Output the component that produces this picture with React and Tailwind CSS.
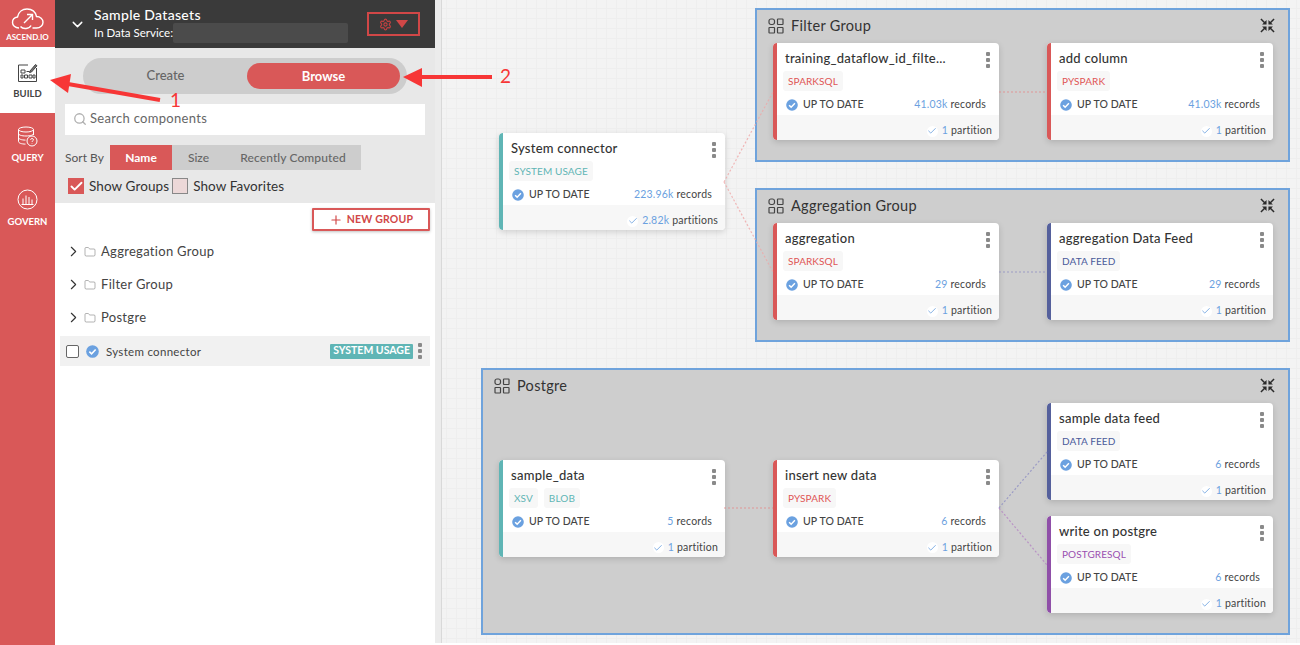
import { ChevronDown, ChevronRight, Folder, Search, Plus, Settings, Check } from "lucide-react";

const font = "font-['Lato','Noto_Sans',sans-serif]";

// small helpers
const CheckCircle = ({ size = 12 }) => (
  <svg width={size} height={size} viewBox="0 0 14 14" className="shrink-0">
    <circle cx="7" cy="7" r="6.8" fill="#6ba1e0" />
    <path d="M3.6 7.2l2.4 2.3 4.4-4.6" fill="none" stroke="#fff" strokeWidth="1.7" />
  </svg>
);

const Dots = () => (
  <div className="flex flex-col gap-[2px]">
    <span className="w-[4px] h-[4px] bg-[#8a8a8a] rounded-[1px]" />
    <span className="w-[4px] h-[4px] bg-[#8a8a8a] rounded-[1px]" />
    <span className="w-[4px] h-[4px] bg-[#8a8a8a] rounded-[1px]" />
  </div>
);

const GroupIcon = () => (
  <svg width="16" height="16" viewBox="0 0 16 16" fill="none" stroke="#444" strokeWidth="1.2">
    <rect x="1" y="1" width="5.5" height="5.5" rx="2" />
    <rect x="9.5" y="1" width="5.5" height="5.5" rx="0.5" />
    <rect x="1" y="9.5" width="5.5" height="5.5" rx="0.5" />
    <rect x="9.5" y="9.5" width="5.5" height="5.5" rx="0.5" />
  </svg>
);

// four arrows pointing to the middle
const CollapseIcon = () => (
  <svg width="15" height="15" viewBox="0 0 16 16" fill="#2b2b2b" stroke="#2b2b2b" strokeWidth="1.6">
    <path d="M1 1l4.5 4.5M15 1l-4.5 4.5M1 15l4.5-4.5M15 15l-4.5-4.5" fill="none" />
    <path d="M7 7H2.2L7 2.2zM9 7h4.8L9 2.2zM7 9H2.2L7 13.8zM9 9h4.8L9 13.8z" stroke="none" />
  </svg>
);

const Tag = ({ label, color }) => (
  <span className={`h-[20px] px-[5px] flex items-center bg-[#f7f7f7] rounded-[3px] text-[10px] leading-none tracking-[0.1px] ${color}`}>
    {label}
  </span>
);

const Node = ({ name, tags, tagColor, bar, records, partitions, unit, className = "" }) => (
  <div className={`w-[226px] h-[97px] bg-white rounded-[4px] shadow-[0_2px_6px_rgba(0,0,0,0.15)] flex overflow-hidden ${className}`}>
    <div className={`w-[4px] shrink-0 rounded-l-[3px] ${bar}`} />
    <div className="flex-1 flex flex-col min-w-0">
      <div className="h-[72px] pl-[8px] pr-[8px]">
        <div className="flex justify-between pt-[7px] h-[28px]">
          <span className="text-[13px] leading-[16px] text-[#333] font-medium tracking-[0.25px]">{name}</span>
          <div className="pt-[2px] pr-[1px]"><Dots /></div>
        </div>
        <div className="flex gap-[6px] -ml-[2px]">
          {tags.map((t) => (
            <Tag key={t} label={t} color={tagColor} />
          ))}
        </div>
        <div className="flex items-center h-[24px] pt-[4px] pl-[1px] pr-[5px]">
          <CheckCircle />
          <span className="ml-[5px] text-[10.5px] font-medium text-[#444] tracking-[0.1px]">UP TO DATE</span>
          <span className="ml-auto text-[10.5px] text-[#444] tracking-[0.2px]">
            <span className="text-[#6ba1e0]">{records}</span> records
          </span>
        </div>
      </div>
      <div className="h-[25px] bg-[#f7f7f7] flex items-center justify-end gap-[4px] pt-[7px] pr-[7px] text-[10.5px] text-[#444] tracking-[0.2px]">
        <span className="w-[11px] h-[11px] rounded-full bg-white flex items-center justify-center">
          <Check size={10} className="text-[#6ba1e0]" />
        </span>
        <span>
          <span className="text-[#6ba1e0]">{partitions}</span> {unit}
        </span>
      </div>
    </div>
  </div>
);

const GroupHeader = ({ title }) => (
  <div className="flex items-center justify-between h-[33px] pl-[11px] pr-[13px] pb-[2px]">
    <div className="flex items-center gap-[7px]">
      <GroupIcon />
      <span className="text-[14.5px] text-[#333] tracking-[0.3px]">{title}</span>
    </div>
    <CollapseIcon />
  </div>
);

const sideItems = [
  { label: "Aggregation Group" },
  { label: "Filter Group" },
  { label: "Postgre" },
];

const Nav = () => (
  <div className="w-[55px] shrink-0 bg-[#d95858] flex flex-col items-center text-white font-bold text-[9.5px]">
    <div className="h-[47px] w-full flex flex-col items-center pt-[7px]">
      <svg width="34" height="24" viewBox="0 0 34 24" fill="none" stroke="#fff" strokeWidth="1.4">
        <path d="M8 21c-4 0-6.5-2.6-6.5-5.6 0-2.8 2-5 5-5.4C7.5 5 11.5 2 16 2c5 0 8.5 3 9.5 7.5 3.8 0 6.5 2.5 6.5 5.7 0 3.2-2.7 5.8-6.5 5.8-1.5 0-3 0-4 0" />
        <path d="M9.5 19.5c2.5 3 9 2.5 10.5-1M13 16l8-8M16 7.5h5.5V13" />
      </svg>
      <span className="mt-[2px] leading-none text-[8px]">ASCEND.IO</span>
    </div>
    <div className="h-[66px] w-full bg-white text-[#444] flex flex-col items-center pt-[15px]">
      <svg width="21" height="21" viewBox="0 0 21 21" fill="none" stroke="#444" strokeWidth="1">
        <path d="M11 3H1.5v16.5h18V6" />
        <path d="M4 8h4v3H4zM4 13h2v3H4zM7.5 13h3v3h-3zM12 13h3v3h-3zM16 13h2v3h-2zM9.5 9.5h3" />
        <path d="M13 9l5.5-6.5 1.5 1.3L14.5 10l-2 .5z" fill="#777" />
      </svg>
      <span className="mt-[6px] leading-none">BUILD</span>
    </div>
    <div className="h-[64px] w-full flex flex-col items-center pt-[13px]">
      <svg width="21" height="22" viewBox="0 0 21 22" fill="none" stroke="#fff" strokeWidth="1">
        <ellipse cx="9" cy="3.5" rx="7.5" ry="2.5" />
        <path d="M1.5 3.5v12c0 1.5 3 2.6 7 2.6M16.5 3.5V9M1.5 7.5c0 1.5 3 2.5 7.5 2.5s7.5-1 7.5-2.5M1.5 11.5c0 1.5 3 2.6 7 2.6" />
        <circle cx="15" cy="15" r="5" />
        <path d="M13.5 13.7c.3-1.6 3-1.5 3 .1 0 1-1.5 1-1.5 2.2M15 17.3v.5" />
      </svg>
      <span className="mt-[5px] leading-none">QUERY</span>
    </div>
    <div className="h-[64px] w-full flex flex-col items-center pt-[12px]">
      <svg width="21" height="21" viewBox="0 0 21 21" fill="none" stroke="#fff" strokeWidth="1">
        <circle cx="10.5" cy="10.5" r="9.5" />
        <path d="M6 15V9.5M9 15V6.5M12 15V8M15 15V10.5M4.5 15.5h12" />
      </svg>
      <span className="mt-[7px] leading-none">GOVERN</span>
    </div>
  </div>
);

const Panel = () => (
  <div className="w-[380px] shrink-0 bg-white flex flex-col">
    {/* dark header */}
    <div className="h-[48px] bg-[#3a3a3a] flex items-center pl-[14px] pr-[15px] text-white">
      <ChevronDown size={17} strokeWidth={2} className="mr-[8px]" />
      <div className="flex-1">
        <div className="text-[14px] leading-[16px] tracking-[0.3px] font-medium mt-[2px]">Sample Datasets</div>
        <div className="flex items-center text-[11.5px] leading-none h-[20px]">
          <span>In Data Service:</span>
          <span className="w-[175px] h-[20px] rounded-[2px] bg-[#4b4b4b]" />
        </div>
      </div>
      <div className="w-[53px] h-[24px] border-2 border-[#d14747] flex items-center justify-center gap-[4px]">
        <Settings size={13} className="text-[#c94040]" />
        <span className="w-0 h-0 border-x-[6px] border-x-transparent border-t-[8px] border-t-[#d14747]" />
      </div>
    </div>
    {/* controls */}
    <div className="h-[155px] bg-[#e8e8e8] flex flex-col px-[10px]">
      <div className="mt-[10px] ml-[18px] w-[324px] h-[36px] rounded-full bg-[#cdcdcd] flex items-center text-[13px]">
        <span className="w-[165px] text-center text-[#666] font-medium">Create</span>
        <span className="w-[153px] -ml-[1px] h-[26px] rounded-full bg-[#d95858] text-white font-bold text-center leading-[26px]">Browse</span>
      </div>
      <div className="mt-[10px] h-[31px] w-[360px] bg-white flex items-center pl-[8px] pb-[2px] text-[13px] text-[#666] tracking-[0.3px]">
        <Search size={14} strokeWidth={2.2} className="text-[#b0b0b0] mr-[3px]" />
        Search components
      </div>
      <div className="mt-[10px] flex items-center h-[25px] text-[12px] text-[#555]">
        <span className="w-[45px]">Sort By</span>
        <span className="w-[62px] h-full bg-[#d95858] text-white font-bold flex items-center justify-center">Name</span>
        <span className="w-[53px] h-full bg-[#cdcdcd] text-[#666] font-medium flex items-center justify-center">Size</span>
        <span className="w-[136px] h-full bg-[#cdcdcd] text-[#666] font-medium flex items-center justify-center tracking-[0.1px]">Recently Computed</span>
      </div>
      <div className="mt-[6px] flex items-center h-[20px] text-[13.5px] text-[#333] tracking-[0.1px]">
        <span className="w-[16px] h-[16px] ml-[3px] bg-[#d95858] flex items-center justify-center">
          <Check size={15} strokeWidth={3} className="text-white" />
        </span>
        <span className="ml-[5px] mr-[3px]">Show Groups</span>
        <span className="w-[16px] h-[16px] bg-[#ecd8d8] border border-[#888]" />
        <span className="ml-[5px]">Show Favorites</span>
      </div>
    </div>
    {/* component list */}
    <div className="flex-1 pl-[5px] pr-[5px]">
      <div className="flex justify-end pt-[5px]">
        <div className="w-[118px] h-[23px] border-2 border-[#d95858] rounded-[1px] shadow-[0_1px_3px_rgba(0,0,0,0.25)] flex items-center justify-center gap-[4px] text-[10.5px] font-bold text-[#d14747] tracking-[0.2px]">
          <Plus size={14} strokeWidth={2} />
          NEW GROUP
        </div>
      </div>
      <div className="mt-[4px] pl-[7px]">
        {sideItems.map((it) => (
          <div key={it.label} className="h-[33px] flex items-center text-[13px] text-[#444] tracking-[0.3px]">
            <ChevronRight size={17} strokeWidth={1.6} className="text-[#333] -ml-[2px]" />
            <Folder size={12} strokeWidth={1} className="text-[#666] ml-[2px] mr-[5px]" />
            {it.label}
          </div>
        ))}
      </div>
      <div className="mt-[2px] h-[30px] bg-[#f1f1f1] flex items-center pl-[6px] pr-[8px]">
        <span className="w-[13px] h-[13px] border border-[#666] rounded-[2px] bg-white" />
        <span className="ml-[7px]"><CheckCircle size={13} /></span>
        <span className="ml-[7px] pt-[1px] text-[11.5px] text-[#444] tracking-[0.3px]">System connector</span>
        <span className="ml-auto h-[15px] px-[3px] rounded-[1px] bg-[#5fb5b5] text-white text-[10.5px] font-bold flex items-center">SYSTEM USAGE</span>
        <div className="ml-[5px]">
          <Dots />
        </div>
      </div>
    </div>
  </div>
);

const Canvas = () => (
  <div className="relative flex-1 h-[643px] bg-[#f3f3f3] bg-[linear-gradient(#eeeeee_1px,transparent_1px),linear-gradient(90deg,#eeeeee_1px,transparent_1px)] bg-[size:10px_10px] bg-[position:4px_8px] overflow-hidden">
    {/* groups */}
    <div className="absolute left-[313px] top-[8px] w-[535px] h-[154px] bg-[#cecece] border-2 border-[#6fa3dc]">
      <GroupHeader title="Filter Group" />
      <div className="flex gap-[48px] pl-[16px]">
        <Node name="training_dataflow_id_filte..." tags={["SPARKSQL"]} tagColor="text-[#e05555]" bar="bg-[#d95858]" records="41.03k" partitions="1" unit="partition" />
        <Node name="add column" tags={["PYSPARK"]} tagColor="text-[#e05555]" bar="bg-[#d95858]" records="41.03k" partitions="1" unit="partition" />
      </div>
    </div>
    <div className="absolute left-[313px] top-[188px] w-[535px] h-[154px] bg-[#cecece] border-2 border-[#6fa3dc]">
      <GroupHeader title="Aggregation Group" />
      <div className="flex gap-[48px] pl-[16px]">
        <Node name="aggregation" tags={["SPARKSQL"]} tagColor="text-[#e05555]" bar="bg-[#d95858]" records="29" partitions="1" unit="partition" />
        <Node name="aggregation Data Feed" tags={["DATA FEED"]} tagColor="text-[#4a5a9a]" bar="bg-[#55609c]" records="29" partitions="1" unit="partition" />
      </div>
    </div>
    <div className="absolute left-[39px] top-[368px] w-[809px] h-[267px] bg-[#cecece] border-2 border-[#6fa3dc]">
      <GroupHeader title="Postgre" />
      <div className="flex items-center gap-[48px] pl-[16px]">
        <Node name="sample_data" tags={["XSV", "BLOB"]} tagColor="text-[#5fb5b5]" bar="bg-[#5fb5b5]" records="5" partitions="1" unit="partition" />
        <Node name="insert new data" tags={["PYSPARK"]} tagColor="text-[#e05555]" bar="bg-[#d95858]" records="6" partitions="1" unit="partition" />
        <div className="flex flex-col gap-[16px]">
          <Node name="sample data feed" tags={["DATA FEED"]} tagColor="text-[#4a5a9a]" bar="bg-[#55609c]" records="6" partitions="1" unit="partition" />
          <Node name="write on postgre" tags={["POSTGRESQL"]} tagColor="text-[#9a4fb0]" bar="bg-[#8f4fa8]" records="6" partitions="1" unit="partition" />
        </div>
      </div>
    </div>
    {/* free standing node */}
    <Node className="absolute left-[57px] top-[133px]" name="System connector" tags={["SYSTEM USAGE"]} tagColor="text-[#5fb5b5]" bar="bg-[#5fb5b5]" records="223.96k" partitions="2.82k" unit="partitions" />
    {/* connections */}
    <svg className="absolute inset-0 w-full h-full pointer-events-none" fill="none" strokeWidth="1.2" strokeDasharray="2 2" opacity="0.8">
      <path d="M282 182L331 92M282 182L331 272" stroke="#f0a8a8" />
      <path d="M557 92H605" stroke="#e58a8a" />
      <path d="M557 272H605" stroke="#8f8fc4" />
      <path d="M282 508H331" stroke="#e58a8a" />
      <path d="M557 508L605 452" stroke="#8f8fc4" />
      <path d="M557 508L605 565" stroke="#b585c4" />
    </svg>
  </div>
);

export default function App() {
  return (
    <div className={`relative w-[1300px] h-[645px] flex overflow-hidden bg-white ${font}`}>
      <Nav />
      <Panel />
      <div className="w-[7px] h-[643px] shrink-0 bg-[#ececec] border-r border-r-[#d9d9d9]" />
      <Canvas />
      {/* red annotation arrows */}
      <svg className="absolute left-0 top-0 w-[520px] h-[120px] pointer-events-none" viewBox="0 0 520 120">
        <path d="M160 100L68 84" stroke="#f73636" strokeWidth="4" />
        <path d="M50 80L71 74L68 93z" fill="#f73636" />
        <path d="M492 77H420" stroke="#f73636" strokeWidth="4" />
        <path d="M403 77L422 68V87z" fill="#f73636" />
      </svg>
      <span className="absolute left-[170px] top-[89px] text-[19px] leading-[22px] text-[#f73636]">1</span>
      <span className="absolute left-[500px] top-[65px] text-[19px] leading-[22px] text-[#f73636]">2</span>
    </div>
  );
}
